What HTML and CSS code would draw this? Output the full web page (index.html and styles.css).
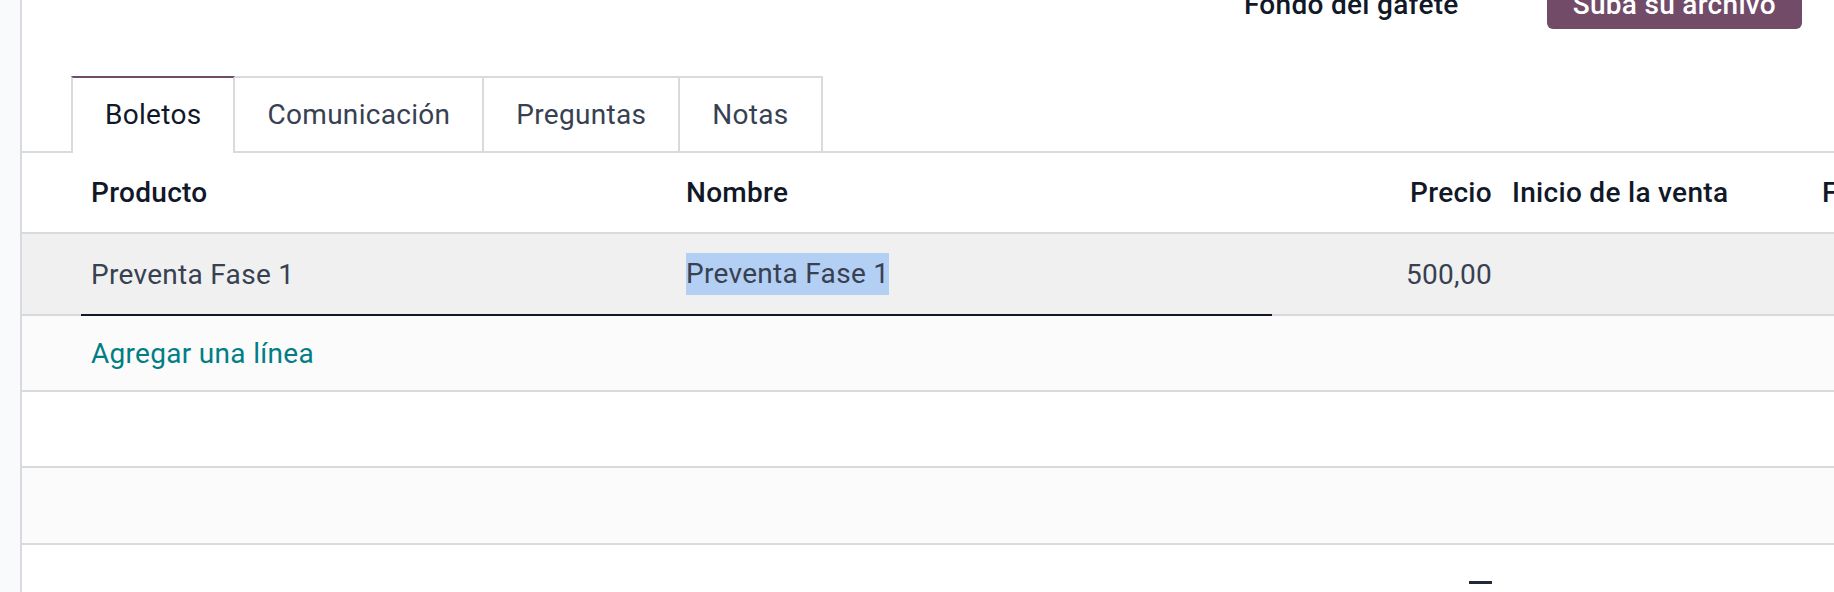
FILE: index.html
```html
<!DOCTYPE html>
<html lang="es">
<head>
  <meta charset="UTF-8">
  <title>Evento - Boletos</title>
  <link rel="stylesheet" href="styles.css">
</head>
<body>
  <div class="gutter"></div>

  <div class="sheet">
    <div class="topbar">
      <span class="field-label">Fondo del gafete</span>
      <button class="btn-upload">Suba su archivo</button>
    </div>

    <div class="tabs">
      <div class="tab active">Boletos</div>
      <div class="tab">Comunicación</div>
      <div class="tab">Preguntas</div>
      <div class="tab">Notas</div>
    </div>

    <div class="list">
      <div class="row head">
        <div class="cell"></div>
        <div class="cell">Producto</div>
        <div class="cell">Nombre</div>
        <div class="cell num">Precio</div>
        <div class="cell">Inicio de la venta</div>
        <div class="cell">F</div>
      </div>

      <div class="row selected">
        <div class="cell"></div>
        <div class="cell edit">Preventa Fase 1</div>
        <div class="cell edit"><span class="sel">Preventa Fase 1</span></div>
        <div class="cell num">500,00</div>
        <div class="cell"></div>
        <div class="cell"></div>
      </div>

      <div class="row add">
        <div class="cell"></div>
        <div class="cell"><a class="add-line">Agregar una línea</a></div>
      </div>

      <div class="row blank"></div>
      <div class="row blank alt"></div>

      <div class="row foot">
        <div class="cell"></div>
        <div class="cell"></div>
        <div class="cell"></div>
        <div class="cell num"><span class="total-mark"></span></div>
      </div>
    </div>
  </div>
</body>
</html>
```

FILE: styles.css
```css
body {
  margin: 0;
  display: flex;
  height: 592px;
  overflow: hidden;
  font-family: Roboto, "Liberation Sans", sans-serif;
  font-size: 28px;
  letter-spacing: 0.3px;
  color: #374151;
  background: #fff;
}

.gutter {
  width: 20px;
  flex: 0 0 20px;
  background: #f9fafb;
  border-right: 2px solid #d8dadd;
}

.sheet {
  flex: 1;
  min-width: 0;
}

/* upload field, cut by the top of the window */
.topbar {
  display: flex;
  justify-content: flex-end;
  align-items: baseline;
  gap: 88px;
  padding-right: 32px;
  margin-top: -16px;
  height: 45px;
}
.field-label {
  font-weight: 500;
  color: #111827;
  line-height: 42px;
}
.btn-upload {
  font-family: inherit;
  font-size: 28px;
  font-weight: 500;
  letter-spacing: 0.3px;
  line-height: 42px;
  padding: 0 26px 3px;
  border: none;
  border-radius: 6px;
  background: #714b67;
  color: #fff;
}

.tabs {
  display: flex;
  margin-top: 47px;
  padding-left: 49px;
  border-bottom: 2px solid #d8dadd;
}
.tab {
  height: 73px;
  line-height: 73px;
  padding: 0 32px;
  border: 2px solid #d8dadd;
  border-bottom: none;
  margin-left: -2px;
  color: #374151;
  background: #fff;
}
.tab:first-child {
  margin-left: 0;
}
.tab.active {
  position: relative;
  z-index: 1;
  color: #111827;
  border-top-color: #714b67;
  height: 75px;
  margin-bottom: -2px;
}

.row {
  display: grid;
  grid-template-columns: 59px 595px 596px 230px 310px 1fr;
  align-items: center;
  border-bottom: 2px solid #d8dadd;
}
.cell {
  padding: 0 10px;
  white-space: nowrap;
  overflow: hidden;
}
.cell.num {
  text-align: right;
}

.row.head {
  height: 79px;
  font-weight: 500;
  color: #111827;
}
.row.selected {
  height: 80px;
  background: #f0f0f0;
}
.row.selected .cell.edit {
  align-self: stretch;
  display: flex;
  align-items: center;
  box-shadow: 0 2px 0 #111827;
}
.sel {
  background: #b3cff3;
  line-height: 42px;
}
.row.add {
  height: 74px;
  background: #fbfbfb;
}
.add-line {
  color: #017e84;
  cursor: pointer;
}
.row.blank {
  height: 74px;
  background: #fff;
}
.row.blank.alt {
  height: 75px;
  background: #fbfbfb;
}
.row.foot {
  border-bottom: none;
  align-items: start;
  padding-top: 36px;
}
.total-mark {
  display: inline-block;
  width: 23px;
  height: 3px;
  background: #1f2937;
  vertical-align: top;
}
```
